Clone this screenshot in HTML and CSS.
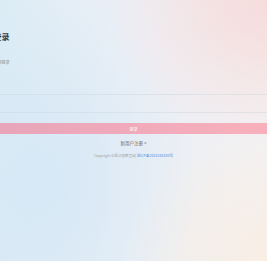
FILE: index.html
```html
<!DOCTYPE html>
<html lang="zh-CN">
<head>
    <meta charset="UTF-8">
    <meta name="viewport" content="width=device-width, initial-scale=1.0">
    <title>登录</title>
    <link rel="stylesheet" href="styles.css">
</head>
<body>

<div class="page">
    <div class="login">
        <h1 class="title">登录</h1>
        <p class="subtitle">欢迎登录</p>

        <div class="field"><input type="text" placeholder=""></div>
        <div class="field"><input type="password" placeholder=""></div>

        <button class="btn">登录</button>

        <a class="register" href="#">新用户注册 &gt;</a>
        <p class="copyright">Copyright ©浙江创联互动 <a href="#">浙ICP备2025181830号</a></p>
    </div>
</div>

</body>
</html>
```

FILE: styles.css
```css
/* General Styling */
* {
    box-sizing: border-box;
    margin: 0;
    padding: 0;
}

html, body {
    height: 100%;
}

body {
    font-family: "Noto Sans CJK SC", "Noto Sans", sans-serif;
    overflow: hidden;
    background:
        radial-gradient(ellipse 60% 55% at 100% 0%, rgba(247, 218, 218, 0.95), rgba(247, 218, 218, 0) 100%),
        radial-gradient(ellipse 55% 50% at 100% 100%, rgba(248, 238, 228, 1), rgba(248, 238, 228, 0) 100%),
        radial-gradient(ellipse 60% 70% at 15% 70%, rgba(214, 232, 246, 1), rgba(214, 232, 246, 0) 100%),
        linear-gradient(90deg, #dcecf5 0%, #eaeff6 45%, #f3f1f2 100%);
    color: #333;
}

.page {
    height: 100%;
    display: flex;
    justify-content: center;
}

.login {
    flex: 0 0 282px;
    padding-top: 30px;
    display: flex;
    flex-direction: column;
}

.title {
    font-size: 8px;
    line-height: 13px;
    font-weight: 600;
    color: #3a3a3a;
    padding-left: 1px;
}

.subtitle {
    font-size: 4px;
    line-height: 6px;
    color: #8a8a8a;
    margin-top: 16px;
    padding-left: 1px;
}

.field {
    height: 18px;
    border-bottom: 1px solid rgba(205, 212, 222, 0.45);
}

.field:first-of-type {
    margin-top: 12px;
}

.field input {
    width: 100%;
    height: 100%;
    border: none;
    background: transparent;
    outline: none;
}

.btn {
    margin-top: 10px;
    height: 11px;
    border: none;
    background: linear-gradient(90deg, #e8a5b9, #f0aabb 50%, #f8b1bb);
    color: #fff;
    font-family: inherit;
    font-size: 4px;
    cursor: pointer;
}

.register {
    align-self: center;
    margin-top: 6px;
    font-size: 4.5px;
    line-height: 6px;
    color: #666;
    text-decoration: none;
}

.copyright {
    align-self: center;
    margin-top: 7px;
    font-size: 3.6px;
    line-height: 6px;
    color: #9a9a9a;
}

.copyright a {
    color: #4a8fe0;
    text-decoration: none;
}
```
